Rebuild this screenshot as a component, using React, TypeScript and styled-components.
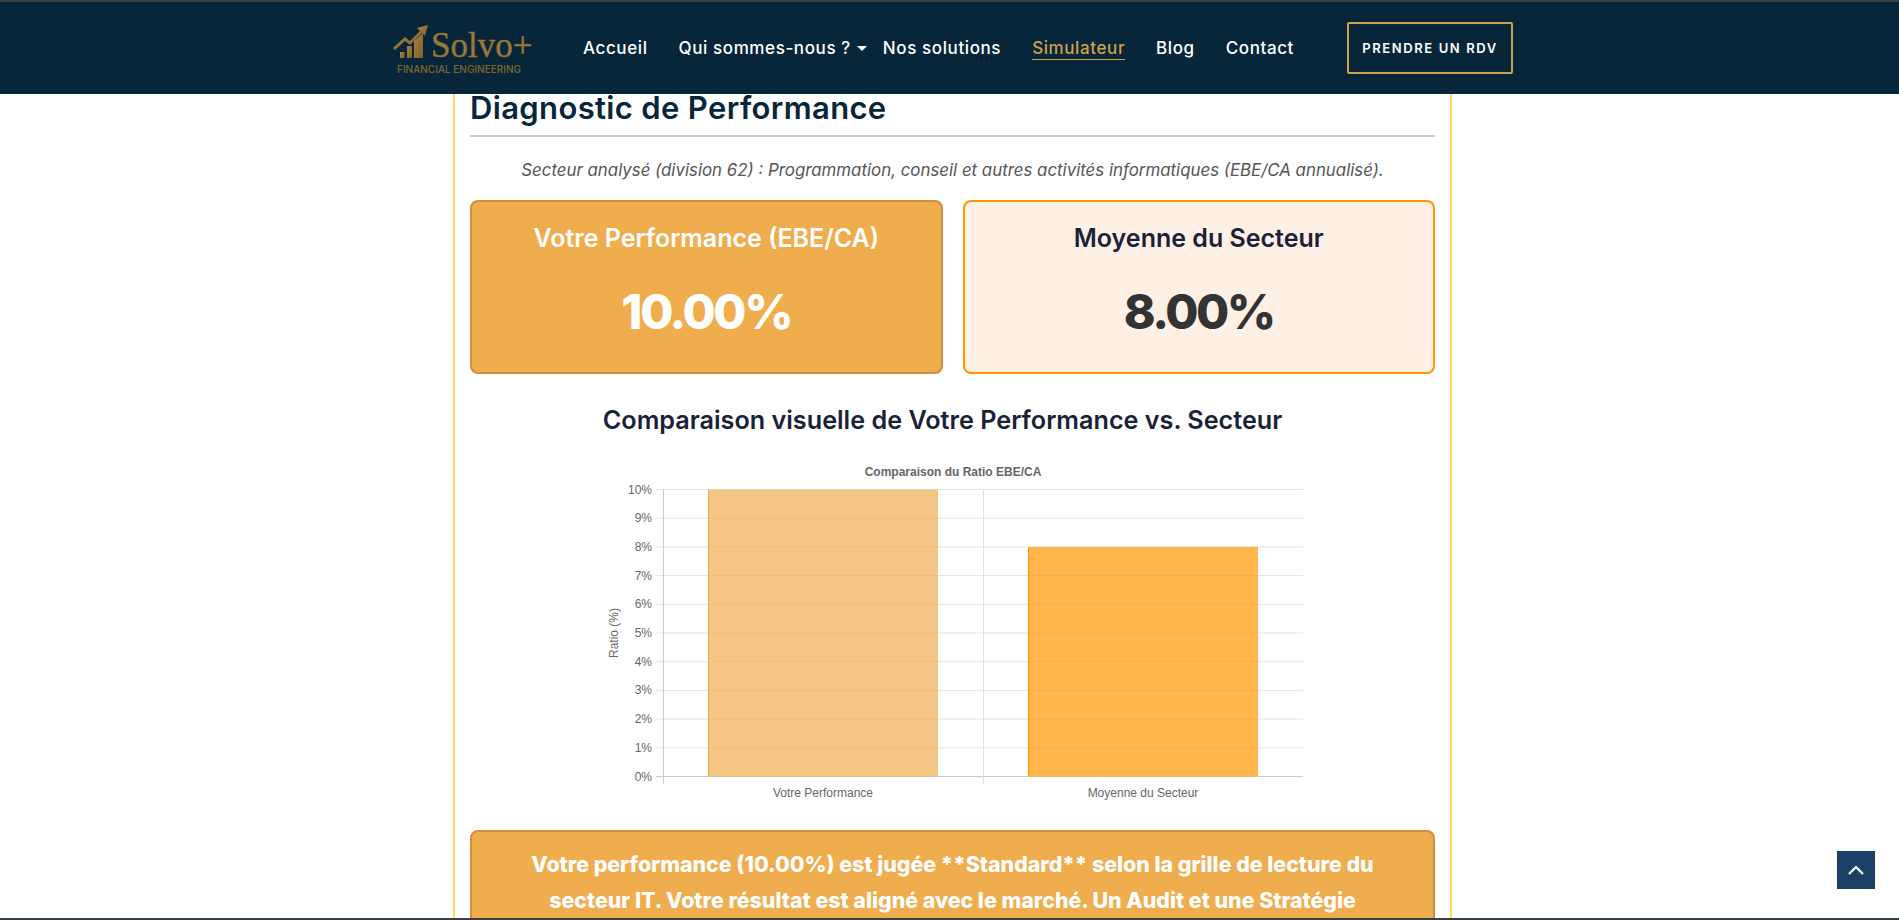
import React from "react";
import styled, { createGlobalStyle } from "styled-components";

const defaults = {
  sans: `Inter, "Open Sans", sans-serif`,
  gold: "#d0a04a",
  navy: "#08263a",
  orange: "#f0ad4e",
};

const navItems = ["Accueil", "Qui sommes-nous ?", "Nos solutions", "Simulateur", "Blog", "Contact"];

const ticks = [0, 1, 2, 3, 4, 5, 6, 7, 8, 9, 10];

const GlobalStyle = createGlobalStyle`
  html, body {
    margin: 0;
    padding: 0;
    height: 100%;
    overflow: hidden;
    background: #ffffff;
    font-family: ${defaults.sans};
  }
`;

const Chart: React.FC = () => {
  const bottom = 314.5;
  const step = 28.7;
  const top = bottom - 10 * step;
  return (
    <ChartSvg viewBox="0 0 720 340" width="720" height="340">
      <ChartTitle x="353" y="14">Comparaison du Ratio EBE/CA</ChartTitle>
      <ChartLabel transform="translate(18,171) rotate(-90)" textAnchor="middle">Ratio (%)</ChartLabel>
      {ticks.map((tick) => {
        const y = bottom - tick * step;
        return (
          <g key={tick}>
            <line x1="56" x2="703" y1={y} y2={y} stroke={tick === 0 ? "#cccccc" : "#e4e4e4"} />
            <ChartLabel x="52" y={y + 4} textAnchor="end">{tick}%</ChartLabel>
          </g>
        );
      })}
      <line x1="63.5" x2="63.5" y1={top} y2={bottom + 8} stroke="#cccccc" />
      <line x1="383.5" x2="383.5" y1={top} y2={bottom + 8} stroke="#e0e0e0" />
      <rect x="108" y={top} width="230" height={10 * step} fill="rgba(240,173,78,0.7)" />
      <rect x="108" y={top} width="1" height={10 * step} fill="#f0ad4e" />
      <rect x="428" y={bottom - 8 * step} width="230" height={8 * step} fill="rgba(255,152,0,0.7)" />
      <rect x="428" y={bottom - 8 * step} width="1" height={8 * step} fill="#ff9800" />
      <ChartLabel x="223" y="335" textAnchor="middle">Votre Performance</ChartLabel>
      <ChartLabel x="543" y="335" textAnchor="middle">Moyenne du Secteur</ChartLabel>
    </ChartSvg>
  );
};

const App: React.FC = () => (
  <Frame>
    <GlobalStyle />
    <Header>
      <Logo>
        <LogoRow>
          <svg width="38" height="38" viewBox="393 20 38 38" aria-hidden="true">
            <defs>
              <linearGradient id="logoGold" x1="0" y1="0" x2="1" y2="1">
                <stop offset="0" stopColor="#a8823f" />
                <stop offset="1" stopColor="#80622c" />
              </linearGradient>
            </defs>
            <rect x="400" y="50" width="4.5" height="6" fill="url(#logoGold)" />
            <rect x="407" y="44" width="5" height="12" fill="url(#logoGold)" />
            <path d="M414 39 L423 31 L423 56 L414 56 Z" fill="url(#logoGold)" />
            <path d="M394 47 L405 37 L410 41 L424 27" fill="none" stroke="url(#logoGold)" strokeWidth="3" />
            <path d="M417 26 L428 23 L425 34 Z" fill="url(#logoGold)" />
          </svg>
          <LogoName>Solvo+</LogoName>
        </LogoRow>
        <LogoTagline>FINANCIAL ENGINEERING</LogoTagline>
      </Logo>
      <Nav>
        {navItems.map((item) => (
          <NavItem key={item} $dropdown={item === "Qui sommes-nous ?"}>
            <NavLabel $active={item === "Simulateur"}>{item}</NavLabel>
            {item === "Qui sommes-nous ?" && <Caret />}
          </NavItem>
        ))}
      </Nav>
      <CtaButton>PRENDRE UN RDV</CtaButton>
    </Header>
    <Main>
      <Panel>
        <Title>Diagnostic de Performance</Title>
        <Subtitle>
          Secteur analysé (division 62) : Programmation, conseil et autres activités informatiques (EBE/CA annualisé).
        </Subtitle>
        <Cards>
          <Card $highlight>
            <CardTitle $highlight>Votre Performance (EBE/CA)</CardTitle>
            <CardValue>10.00%</CardValue>
          </Card>
          <Card>
            <CardTitle>Moyenne du Secteur</CardTitle>
            <CardValue>8.00%</CardValue>
          </Card>
        </Cards>
        <SectionTitle>Comparaison visuelle de Votre Performance vs. Secteur</SectionTitle>
        <ChartWrap>
          <Chart />
        </ChartWrap>
        <Verdict>
          Votre performance (10.00%) est jugée **Standard** selon la grille de lecture du secteur IT. Votre résultat
          est aligné avec le marché. Un Audit et une Stratégie
        </Verdict>
      </Panel>
    </Main>
    <ScrollTop aria-label="Haut de page">
      <svg width="18" height="18" viewBox="0 0 18 18" aria-hidden="true">
        <path d="M2 13 L9 6 L16 13" fill="none" stroke="#ffffff" strokeWidth="2.2" />
      </svg>
    </ScrollTop>
  </Frame>
);
export default App;

const Frame = styled.div`
  display: flex;
  flex-direction: column;
  height: 920px;
  box-sizing: border-box;
  overflow: hidden;
  border-top: 2px solid #3c3f41;
  border-bottom: 2px solid #3c3f41;
`;
const Header = styled.header`
  display: flex;
  align-items: center;
  flex: 0 0 92px;
  box-sizing: border-box;
  padding-left: 393px;
  background-color: ${defaults.navy};
`;
const Logo = styled.div`
  display: flex;
  flex-direction: column;
  width: 190px;
`;
const LogoRow = styled.div`
  display: flex;
  align-items: flex-start;
  height: 38px;
`;
const LogoName = styled.span`
  margin-top: 5px;
  font-family: "Liberation Serif", serif;
  font-size: 35px;
  line-height: 38px;
  color: #987739;
  -webkit-text-stroke: 0.4px #987739;
`;
const LogoTagline = styled.span`
  margin: 3px 0 0 4px;
  font-size: 10px;
  font-weight: 500;
  line-height: 12px;
  color: #7d6633;
`;
const Nav = styled.nav`
  display: flex;
  align-items: center;
  flex: 0 0 764px;
`;
const NavItem = styled.div<{ $dropdown?: boolean }>`
  display: flex;
  align-items: center;
  margin-right: ${(p) => (p.$dropdown ? "16px" : "31px")};
`;
const NavLabel = styled.span<{ $active?: boolean }>`
  font-size: 17px;
  font-weight: 500;
  line-height: 22px;
  letter-spacing: 0.6px;
  white-space: nowrap;
  color: ${(p) => (p.$active ? defaults.gold : "#ffffff")};
  border-bottom: 1px solid ${(p) => (p.$active ? defaults.gold : "transparent")};
`;
const Caret = styled.span`
  width: 0;
  height: 0;
  margin-left: 6px;
  border-left: 5px solid transparent;
  border-right: 5px solid transparent;
  border-top: 5px solid #ffffff;
`;
const CtaButton = styled.button`
  flex: none;
  width: 166px;
  height: 52px;
  padding: 0;
  font-family: ${defaults.sans};
  font-size: 13px;
  font-weight: 600;
  letter-spacing: 1.6px;
  color: #ffffff;
  background: transparent;
  border: 2px solid ${defaults.gold};
  border-radius: 2px;
`;
const Main = styled.main`
  flex: 1;
  min-height: 0;
  overflow: hidden;
  padding-left: 453px;
`;
const Panel = styled.section`
  box-sizing: border-box;
  width: 999px;
  padding: 0 15px;
  border-left: 2px solid #ffd966;
  border-right: 2px solid #ffd966;
`;
const Title = styled.h1`
  margin: -2px 0 0;
  padding-bottom: 11px;
  font-size: 31px;
  font-weight: 600;
  line-height: 32px;
  letter-spacing: 0.35px;
  color: ${defaults.navy};
  border-bottom: 2px solid #cccccc;
`;
const Subtitle = styled.p`
  margin: 21px 0 0;
  font-size: 16.85px;
  font-style: italic;
  line-height: 24px;
  text-align: center;
  color: #555555;
`;
const Cards = styled.div`
  display: grid;
  grid-template-columns: 1fr 1fr;
  gap: 20px;
  margin-top: 18px;
`;
const Card = styled.div<{ $highlight?: boolean }>`
  box-sizing: border-box;
  height: 174px;
  padding-top: 18px;
  text-align: center;
  color: ${(p) => (p.$highlight ? "#ffffff" : "#333333")};
  background-color: ${(p) => (p.$highlight ? defaults.orange : "#fff0e6")};
  border: 2px solid ${(p) => (p.$highlight ? "#d08f3a" : "#ff9800")};
  border-radius: 8px;
`;
const CardTitle = styled.h3<{ $highlight?: boolean }>`
  margin: 0;
  font-size: 25px;
  font-weight: 600;
  line-height: 36px;
  color: ${(p) => (p.$highlight ? "#ffffff" : "#1a2238")};
`;
const CardValue = styled.div`
  margin-top: 20px;
  font-size: 48px;
  font-weight: 800;
  line-height: 72px;
  letter-spacing: -2.4px;
`;
const SectionTitle = styled.h2`
  margin: 29px 0 0;
  padding-right: 20px;
  font-size: 25.2px;
  font-weight: 600;
  line-height: 34px;
  text-align: center;
  color: #1a2238;
`;
const ChartWrap = styled.div`
  display: flex;
  justify-content: center;
  height: 368px;
  margin-top: 25px;
`;
const ChartSvg = styled.svg`
  display: block;
  margin-left: 14px;
  font-family: "Liberation Sans", Arial, sans-serif;
`;
const ChartTitle = styled.text`
  font-size: 12px;
  font-weight: 700;
  text-anchor: middle;
  fill: #666666;
`;
const ChartLabel = styled.text`
  font-size: 12px;
  fill: #666666;
`;
const Verdict = styled.div`
  box-sizing: border-box;
  padding: 14px 40px;
  font-size: 21.36px;
  font-weight: 800;
  line-height: 36px;
  text-align: center;
  color: #ffffff;
  background-color: ${defaults.orange};
  border: 2px solid #d08f3a;
  border-radius: 8px;
`;
const ScrollTop = styled.button`
  position: fixed;
  right: 24px;
  bottom: 31px;
  display: flex;
  align-items: center;
  justify-content: center;
  width: 38px;
  height: 38px;
  padding: 0;
  background-color: #1c3f66;
  border: none;
`;
